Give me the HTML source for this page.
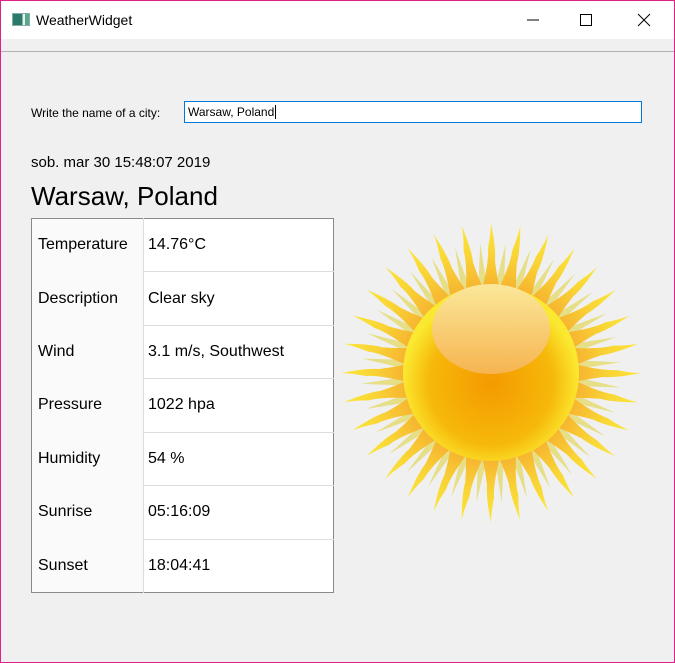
<!DOCTYPE html>
<html><head><meta charset="utf-8"><style>
*{margin:0;padding:0;box-sizing:border-box}
html,body{width:675px;height:663px;overflow:hidden;background:#f0f0f0;font-family:"Liberation Sans",sans-serif;color:#000}
.win{position:absolute;left:0;top:0;width:675px;height:663px;border:1px solid #e0208a;background:#f0f0f0}
.title{position:absolute;left:0;top:0;width:673px;height:38px;background:#fff}
.title .t{position:absolute;left:35px;top:11px;font-size:14px}
.ico{position:absolute;left:11px;top:12px;width:18px;height:13px;border:1px solid #8aa;background:linear-gradient(90deg,#2a7a6a 0 60%,#e8f0f0 60% 75%,#5a8 75%)}
.line{position:absolute;left:0;top:50px;width:673px;height:1px;background:#b0b0b0}
.lbl{position:absolute;left:30px;top:105px;font-size:12px}
.inp{position:absolute;left:183px;top:100px;width:458px;height:22px;border:1px solid #0078d7;background:#fff;font-size:12px;padding:3px 0 0 3px}
.date{position:absolute;left:30px;top:153px;font-size:15px}
.city{position:absolute;left:30px;top:180px;font-size:26px}
table{position:absolute;left:30px;top:217px;width:303px;height:375px;border:1px solid #8a8a8a;border-collapse:collapse;background:#fff}
td{font-size:16px;height:53px;padding-left:6px;vertical-align:middle}
td.a{width:112px;background:#fafafa}
td.b{border-left:1px solid #ddd;border-top:1px solid #ddd;padding-left:4px}
tr:first-child td.b{border-top:none}
</style></head><body><div class="win">
<div class="title"><div class="ico"></div><div class="t">WeatherWidget</div>
<svg style="position:absolute;left:510px;top:0" width="160" height="38"><line x1="16" y1="19" x2="28" y2="19" stroke="#000"/><rect x="69.5" y="13.5" width="11" height="11" fill="none" stroke="#000"/><path d="M127 13 L139 25 M139 13 L127 25" stroke="#000"/></svg></div>
<div class="line"></div>
<div class="lbl">Write the name of a city:</div>
<div class="inp">Warsaw, Poland<span style="border-left:1px solid #000;margin-left:1px"></span></div>
<div class="date">sob. mar 30 15:48:07 2019</div>
<div class="city">Warsaw, Poland</div>
<table>
<tr><td class="a">Temperature</td><td class="b">14.76°C</td></tr>
<tr><td class="a">Description</td><td class="b">Clear sky</td></tr>
<tr><td class="a">Wind</td><td class="b">3.1 m/s, Southwest</td></tr>
<tr><td class="a">Pressure</td><td class="b">1022 hpa</td></tr>
<tr><td class="a">Humidity</td><td class="b">54 %</td></tr>
<tr><td class="a">Sunrise</td><td class="b">05:16:09</td></tr>
<tr><td class="a">Sunset</td><td class="b">18:04:41</td></tr>
</table>
<svg style="position:absolute;left:340px;top:220px" width="300" height="305" viewBox="-150 -152 300 305">
<defs>
<radialGradient id="rg" cx="0" cy="0" r="150" gradientUnits="userSpaceOnUse"><stop offset="0.55" stop-color="#f6b030"/><stop offset="0.8" stop-color="#f9d535"/><stop offset="1" stop-color="#fbe63a"/></radialGradient>
<radialGradient id="cg" cx="0" cy="10" r="88" gradientUnits="userSpaceOnUse"><stop offset="0" stop-color="#f49a00"/><stop offset="0.7" stop-color="#f6b80a"/><stop offset="1" stop-color="#fbe830"/></radialGradient>
<linearGradient id="hg" x1="0" y1="0" x2="0" y2="1"><stop offset="0" stop-color="#fbe89a"/><stop offset="1" stop-color="#f6b450"/></linearGradient>
<path id="r1" d="M-10 -80 Q-2 -110 -3 -125 Q0 -140 0 -150 Q5 -125 4 -112 Q6 -95 10 -80 Z" fill="url(#rg)"/>
<path id="r2" d="M-5 -80 Q-1 -110 2 -130 Q3 -110 5 -80 Z" fill="#e6df88"/>
</defs>
<g>
<use href="#r2" transform="rotate(5.6)"/><use href="#r2" transform="rotate(16.9)"/><use href="#r2" transform="rotate(28.1)"/><use href="#r2" transform="rotate(39.4)"/><use href="#r2" transform="rotate(50.6)"/><use href="#r2" transform="rotate(61.9)"/><use href="#r2" transform="rotate(73.1)"/><use href="#r2" transform="rotate(84.4)"/><use href="#r2" transform="rotate(95.6)"/><use href="#r2" transform="rotate(106.9)"/><use href="#r2" transform="rotate(118.1)"/><use href="#r2" transform="rotate(129.4)"/><use href="#r2" transform="rotate(140.6)"/><use href="#r2" transform="rotate(151.9)"/><use href="#r2" transform="rotate(163.1)"/><use href="#r2" transform="rotate(174.4)"/><use href="#r2" transform="rotate(185.6)"/><use href="#r2" transform="rotate(196.9)"/><use href="#r2" transform="rotate(208.1)"/><use href="#r2" transform="rotate(219.4)"/><use href="#r2" transform="rotate(230.6)"/><use href="#r2" transform="rotate(241.9)"/><use href="#r2" transform="rotate(253.1)"/><use href="#r2" transform="rotate(264.4)"/><use href="#r2" transform="rotate(275.6)"/><use href="#r2" transform="rotate(286.9)"/><use href="#r2" transform="rotate(298.1)"/><use href="#r2" transform="rotate(309.4)"/><use href="#r2" transform="rotate(320.6)"/><use href="#r2" transform="rotate(331.9)"/><use href="#r2" transform="rotate(343.1)"/><use href="#r2" transform="rotate(354.4)"/>
<use href="#r1" transform="rotate(0)"/><use href="#r1" transform="rotate(11.25)"/><use href="#r1" transform="rotate(22.5)"/><use href="#r1" transform="rotate(33.75)"/><use href="#r1" transform="rotate(45)"/><use href="#r1" transform="rotate(56.25)"/><use href="#r1" transform="rotate(67.5)"/><use href="#r1" transform="rotate(78.75)"/><use href="#r1" transform="rotate(90)"/><use href="#r1" transform="rotate(101.25)"/><use href="#r1" transform="rotate(112.5)"/><use href="#r1" transform="rotate(123.75)"/><use href="#r1" transform="rotate(135)"/><use href="#r1" transform="rotate(146.25)"/><use href="#r1" transform="rotate(157.5)"/><use href="#r1" transform="rotate(168.75)"/><use href="#r1" transform="rotate(180)"/><use href="#r1" transform="rotate(191.25)"/><use href="#r1" transform="rotate(202.5)"/><use href="#r1" transform="rotate(213.75)"/><use href="#r1" transform="rotate(225)"/><use href="#r1" transform="rotate(236.25)"/><use href="#r1" transform="rotate(247.5)"/><use href="#r1" transform="rotate(258.75)"/><use href="#r1" transform="rotate(270)"/><use href="#r1" transform="rotate(281.25)"/><use href="#r1" transform="rotate(292.5)"/><use href="#r1" transform="rotate(303.75)"/><use href="#r1" transform="rotate(315)"/><use href="#r1" transform="rotate(326.25)"/><use href="#r1" transform="rotate(337.5)"/><use href="#r1" transform="rotate(348.75)"/>
</g>
<circle cx="0" cy="0" r="88" fill="url(#cg)"/>
<ellipse cx="0" cy="-44" rx="59" ry="45" fill="url(#hg)"/>
</svg>
</div></body></html>
